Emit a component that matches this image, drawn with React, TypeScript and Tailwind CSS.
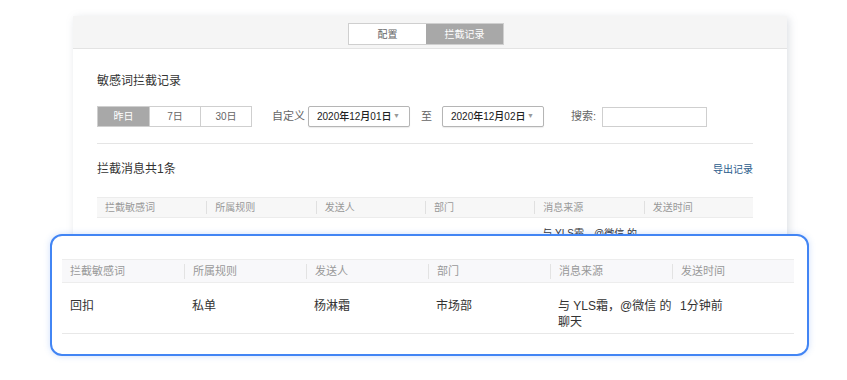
const cols = ["拦截敏感词", "所属规则", "发送人", "部门", "消息来源", "发送时间"];

function DateSelect({ value }: { value: string }) {
  return (
    <div className="flex items-center justify-between w-[102px] h-[21px] border border-[#b5b5b5] rounded-[2px] bg-white pl-[8px] pr-[9px] shadow-[0_1px_1px_rgba(0,0,0,0.08)]">
      <span className="text-[10px] font-medium text-[#222]">{value}</span>
      <span className="text-[7px] text-[#999]">▼</span>
    </div>
  );
}

function Card() {
  return (
    <div className="w-[714px] h-[330px] bg-white shadow-[2px_2px_8px_rgba(120,130,150,0.25)]">
      <div className="h-[33px] bg-[#f5f5f5] border-b border-[#e3e3e3] pl-[275px] pt-[7px]">
        <div className="flex h-[22px] border border-[#cfcfcf] w-fit">
          <div className="w-[77px] flex items-center justify-center bg-white text-[10px] text-[#666]">配置</div>
          <div className="w-[77px] flex items-center justify-center bg-[#a8a8a8] text-[10px] text-white">拦截记录</div>
        </div>
      </div>
      <div className="pl-[24px] pr-[34px]">
        <div className="mt-[24px] text-[12px] leading-[16px] text-[#333]">敏感词拦截记录</div>
        <div className="mt-[17px] flex items-center h-[21px]">
          <div className="flex h-[21px] border border-[#cfcfcf]">
            <div className="w-[51px] flex items-center justify-center bg-[#a8a8a8] text-[10px] text-white">昨日</div>
            <div className="w-[51px] flex items-center justify-center border-l border-[#cfcfcf] text-[10px] text-[#666]">7日</div>
            <div className="w-[51px] flex items-center justify-center border-l border-[#cfcfcf] text-[10px] text-[#666]">30日</div>
          </div>
          <span className="ml-[20px] mr-[3px] text-[11px] text-[#666]">自定义</span>
          <DateSelect value="2020年12月01日" />
          <span className="ml-[11px] mr-[10px] text-[11px] text-[#666]">至</span>
          <DateSelect value="2020年12月02日" />
          <span className="ml-[27px] mr-[6px] text-[11px] text-[#666]">搜索:</span>
          <div className="w-[105px] h-[20px] border border-[#cfcfcf] bg-white" />
        </div>
        <div className="mt-[16px] border-t border-[#e5e5e5]" />
        <div className="mt-[17px] flex items-center justify-between h-[16px]">
          <span className="text-[12px] text-[#333]">拦截消息共1条</span>
          <span className="text-[10px] text-[#2a5b8c]">导出记录</span>
        </div>
        <div className="mt-[20px] grid grid-cols-6 h-[21px] bg-[#f7f7f7] border-y border-[#ececec]">
          {cols.map((c, i) => (
            <div key={c} className="flex items-center">
              {i > 0 && <div className="w-px h-[13px] bg-[#e0e0e0]" />}
              <span className="pl-[8px] text-[10px] text-[#999]">{c}</span>
            </div>
          ))}
        </div>
        <div className="grid grid-cols-6 items-center py-[9px] text-[10px] leading-[14px] text-[#333]">
          <span className="pl-[8px]">回扣</span>
          <span className="pl-[8px]">私单</span>
          <span className="pl-[8px]">杨淋霜</span>
          <span className="pl-[8px]">市场部</span>
          <span className="pl-[8px] whitespace-nowrap">
            与 YLS霜，@微信 的
            <br />
            聊天
          </span>
          <span className="pl-[8px]">1分钟前</span>
        </div>
      </div>
    </div>
  );
}

function Overlay() {
  return (
    <div className="absolute left-[50px] top-[234px] w-[759px] h-[122px] bg-white border-2 border-[#4285f4] rounded-[12px] shadow-[0_0_6px_rgba(66,133,244,0.25)] pl-[10px] pr-[13px] pt-[23px]">
      <div className="grid grid-cols-6 h-[24px] bg-[#f8f8fa] border-y border-[#ededed]">
        {cols.map((c, i) => (
          <div key={c} className="flex items-center">
            {i > 0 && <div className="w-px h-[15px] bg-[#e3e3e3]" />}
            <span className="pl-[8px] text-[11px] text-[#999]">{c}</span>
          </div>
        ))}
      </div>
      <div className="grid grid-cols-6 h-[51px] border-b border-[#e8e8e8] pt-[15px] text-[12px] leading-[16px] text-[#333]">
        <span className="pl-[8px]">回扣</span>
        <span className="pl-[8px]">私单</span>
        <span className="pl-[8px]">杨淋霜</span>
        <span className="pl-[8px]">市场部</span>
        <span className="pl-[8px] whitespace-nowrap">
          与 YLS霜，@微信 的
          <br />
          聊天
        </span>
        <span className="pl-[8px]">1分钟前</span>
      </div>
    </div>
  );
}

export default function App() {
  return (
    <div className="relative w-[847px] h-[380px] overflow-hidden bg-white font-['Liberation_Sans','Noto_Sans_CJK_SC',sans-serif]">
      <div className="pt-[16px] pl-[73px]">
        <Card />
      </div>
      <Overlay />
    </div>
  );
}
